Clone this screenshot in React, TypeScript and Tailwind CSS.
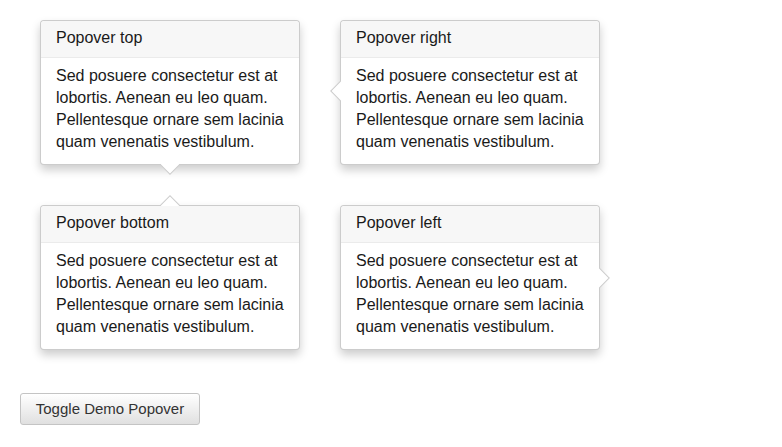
import React from 'react'

const body = 'Sed posuere consectetur est at lobortis. Aenean eu leo quam. Pellentesque ornare sem lacinia quam venenatis vestibulum.'

type Side = 'top' | 'right' | 'bottom' | 'left'

function Arrow({ side }: { side: Side }) {
  // rotated square sitting on the popover edge
  const base = 'absolute w-[14px] h-[14px] bg-white rotate-45 border-[rgba(0,0,0,0.2)]'
  if (side === 'top')
    return <div className={`${base} left-1/2 -ml-[7px] -bottom-[8px] border-r border-b`} />
  if (side === 'bottom')
    return <div className={`${base} left-1/2 -ml-[7px] -top-[8px] border-l border-t bg-[#f7f7f7]`} />
  if (side === 'right')
    return <div className={`${base} top-1/2 -mt-[9px] -left-[8px] border-l border-b`} />
  return <div className={`${base} top-1/2 -mt-[7px] -right-[8px] border-r border-t`} />
}

function Popover({ title, side }: { title: string; side: Side }) {
  return (
    <div className="relative w-[260px] bg-white border border-[rgba(0,0,0,0.2)] rounded-[4px] shadow-[0_5px_10px_rgba(0,0,0,0.2)]">
      <Arrow side={side} />
      <div className="relative rounded-t-[4px] bg-[#f7f7f7] border-b border-[#ebebeb] px-[15px] pt-[7px] pb-[9px] text-[16px] leading-[20px] text-[#1a1a1a]">
        {title}
      </div>
      <div className="relative px-[15px] pt-[7px] pb-[11px] text-[16px] leading-[22px] text-[#1a1a1a]">{body}</div>
    </div>
  )
}

export default function App() {
  return (
    <div className="min-h-[447px] bg-white pt-[20px] pl-[20px]" style={{ fontFamily: '"Liberation Sans", Arial, sans-serif' }}>
      <div className="ml-[20px] grid grid-cols-[260px_260px] gap-x-[40px] gap-y-[40px]">
        <Popover title="Popover top" side="top" />
        <Popover title="Popover right" side="right" />
        <Popover title="Popover bottom" side="bottom" />
        <Popover title="Popover left" side="left" />
      </div>
      <button className="mt-[43px] w-[180px] h-[32px] rounded-[3px] border border-[#c4c4c4] bg-gradient-to-b from-white to-[#e0e0e0] text-[15px] text-[#333] shadow-[inset_0_1px_0_rgba(255,255,255,0.15)]">
        Toggle Demo Popover
      </button>
    </div>
  )
}
